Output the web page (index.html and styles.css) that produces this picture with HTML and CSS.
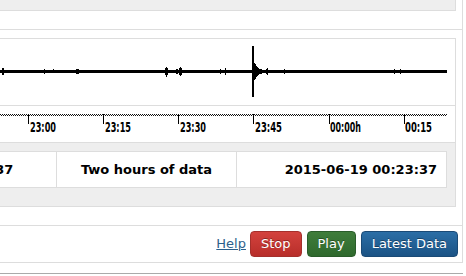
FILE: index.html
```html
<!DOCTYPE html>
<html lang="en">
<head>
  <meta charset="UTF-8">
  <title>Seismogram Viewer</title>
  <link rel="stylesheet" href="styles.css">
</head>
<body>
  <div class="page">
    <div class="panel">
      <div class="sec sec-top">
        <div class="toolbar"></div>
      </div>
      <div class="sec sec-graph">
        <div class="graph">
          <svg class="plot" width="613" height="103" viewBox="-158 0 613 103" shape-rendering="crispEdges">
            <!-- trace -->
            <g fill="#000">
              <rect x="-158" y="31" width="605" height="3"/>
              <rect x="2" y="29" width="2" height="7"/>
              <rect x="44" y="30" width="1" height="5"/>
              <rect x="53" y="30" width="1" height="4"/>
              <rect x="76" y="30" width="3" height="5"/>
              <rect x="165" y="29" width="3" height="7"/>
              <rect x="166" y="28" width="1" height="10"/>
              <rect x="176" y="30" width="2" height="5"/>
              <rect x="179" y="29" width="3" height="7"/>
              <rect x="180" y="28" width="1" height="9"/>
              <rect x="220" y="30" width="1" height="5"/>
              <rect x="225" y="29" width="1" height="7"/>
              <rect x="252" y="7" width="2" height="51"/>
              <polygon points="254,23 256,26 258,28.5 260,30 263,31 263,34 260,35 258,36.5 256,39 254,42"/>
              <rect x="266" y="30" width="2" height="5"/>
              <rect x="267" y="29" width="1" height="7"/>
              <rect x="284" y="30" width="1" height="5"/>
              <rect x="394" y="30" width="1" height="5"/>
              <rect x="400" y="30" width="1" height="5"/>
            </g>
            <rect x="-158" y="66" width="613" height="1" fill="#ddd"/>
            <!-- time axis -->
            <line x1="-158" y1="75.5" x2="447" y2="75.5" stroke="#111" stroke-dasharray="1 1"/>
            <line x1="-157" y1="76.5" x2="447" y2="76.5" stroke="#111" stroke-dasharray="1 1"/>
            <g fill="#000">
              <rect x="28" y="75" width="1" height="10"/>
              <rect x="103" y="75" width="1" height="10"/>
              <rect x="178" y="75" width="1" height="10"/>
              <rect x="253" y="75" width="1" height="10"/>
              <rect x="329" y="75" width="1" height="10"/>
              <rect x="404" y="75" width="1" height="10"/>
            </g>
            <g class="tick-label" shape-rendering="auto">
              <text x="30" y="93" textLength="26" lengthAdjust="spacingAndGlyphs">23:00</text>
              <text x="105" y="93" textLength="26" lengthAdjust="spacingAndGlyphs">23:15</text>
              <text x="180" y="93" textLength="26" lengthAdjust="spacingAndGlyphs">23:30</text>
              <text x="255" y="93" textLength="27" lengthAdjust="spacingAndGlyphs">23:45</text>
              <text x="330" y="93" textLength="31" lengthAdjust="spacingAndGlyphs">00:00h</text>
              <text x="405" y="93" textLength="27" lengthAdjust="spacingAndGlyphs">00:15</text>
            </g>
          </svg>
        </div>
        <div class="info">
          <div class="info-row">
            <div class="cell cell-start">2015-06-18 22:23:37</div>
            <div class="cell cell-span">Two hours of data</div>
            <div class="cell cell-end">2015-06-19 00:23:37</div>
          </div>
        </div>
      </div>
      <div class="sec sec-actions">
        <a href="#" class="help">Help</a>
        <button class="btn btn-stop">Stop</button>
        <button class="btn btn-play">Play</button>
        <button class="btn btn-latest">Latest Data</button>
      </div>
    </div>
    <div class="footer"></div>
  </div>
</body>
</html>
```

FILE: styles.css
```css
body { margin: 0; font-family: "DejaVu Sans", Verdana, sans-serif; font-size: 13px; color: #000; background: #fff; overflow: hidden; }
.page { margin-left: -168px; width: 631px; }
.panel { border: 1px solid #ddd; border-top: none; }
.sec-top { padding: 0 6px 18px 8px; }
.toolbar { height: 10px; background: #eee; border: 1px solid #ddd; border-top: none; }
.sec-graph { border-top: 1px solid #ddd; padding: 8px 6px 18px 8px; }
.graph { border: 1px solid #ddd; background: #fff; line-height: 0; }
.plot { display: block; }
.tick-label text { font-family: "DejaVu Sans Condensed", "Liberation Sans Narrow", "Liberation Sans", sans-serif; font-size: 14px; font-weight: bold; fill: #000; }
.info { background: #eee; border: 1px solid #ddd; border-top: none; padding: 8px 8px 18px 8px; }
.info-row { display: grid; grid-template-columns: 205px 180px 1fr; background: #fff; border: 1px solid #ddd; }
.cell { height: 35px; line-height: 35px; padding: 0 10px; font-weight: bold; white-space: nowrap; }
.cell + .cell { border-left: 1px solid #ddd; }
.cell-span { text-align: center; }
.cell-end { text-align: right; padding-right: 9px; }
.sec-actions { border-top: 1px solid #ddd; padding: 5px 4px 5px 8px; display: flex; justify-content: flex-end; align-items: center; gap: 5px; }
.help { color: #2d5f8b; text-decoration: underline; line-height: 26px; margin-right: -1px; }
.btn { height: 26px; padding: 0 10px; border: 1px solid; border-radius: 4px; font-family: inherit; font-size: 13px; line-height: 24px; color: #fff; text-shadow: 0 -1px 0 rgba(0,0,0,0.35); cursor: pointer; }
.btn-stop { background: linear-gradient(#d3423d, #b82e2a); border-color: #a5302c; }
.btn-play { background: linear-gradient(#3f7d3b, #2f692d); border-color: #2a5c2a; }
.btn-latest { background: linear-gradient(#2b6ea6, #1b5385); border-color: #1a4a76; }
.footer { margin-top: 10px; border-top: 1px solid #aaa; }
```
